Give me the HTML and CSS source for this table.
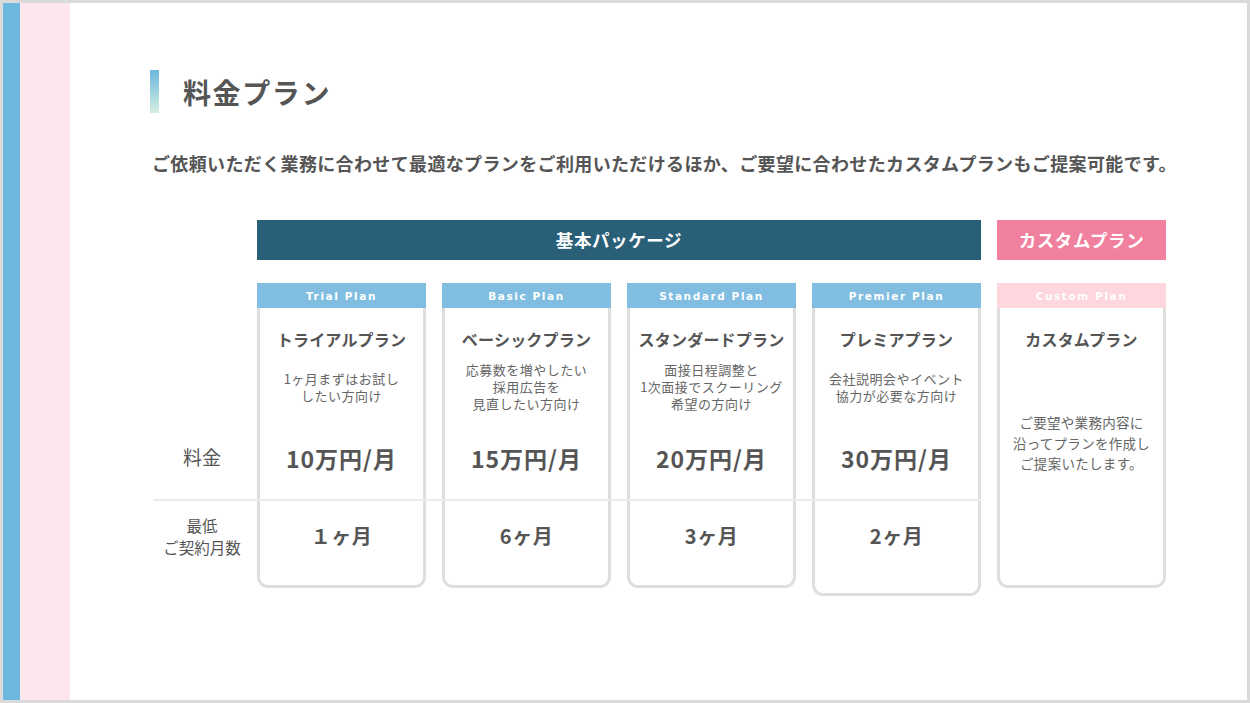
FILE: index.html
```html
<!DOCTYPE html>
<html lang="ja">
<head>
<meta charset="utf-8">
<title>料金プラン</title>
<link rel="stylesheet" href="styles.css">
</head>
<body>
<div class="frame">
  <div class="stripe-blue"></div>
  <div class="stripe-pink"></div>
  <main class="content">
    <h1 class="title"><span class="accent"></span><span>料金プラン</span></h1>
    <p class="lead">ご依頼いただく業務に合わせて最適なプランをご利用いただけるほか、ご要望に合わせたカスタムプランもご提案可能です。</p>

    <div class="heads">
      <div class="head-spacer"></div>
      <div class="head head-pkg">基本パッケージ</div>
      <div class="head head-custom">カスタムプラン</div>
    </div>

    <div class="plans">
      <div class="labels">
        <div class="label-spacer"></div>
        <div class="label label-price">料金</div>
        <div class="label label-months">最低<br>ご契約月数</div>
      </div>
      <div class="cards">
        <div class="card">
          <div class="band">Trial Plan</div>
          <div class="body">
            <div class="name">トライアルプラン</div>
            <div class="desc">1ヶ月まずはお試し<br>したい方向け</div>
            <div class="price">10万円/月</div>
            <div class="months">１ヶ月</div>
          </div>
        </div>
        <div class="card">
          <div class="band">Basic Plan</div>
          <div class="body">
            <div class="name">ベーシックプラン</div>
            <div class="desc">応募数を増やしたい<br>採用広告を<br>見直したい方向け</div>
            <div class="price">15万円/月</div>
            <div class="months">6ヶ月</div>
          </div>
        </div>
        <div class="card">
          <div class="band">Standard Plan</div>
          <div class="body">
            <div class="name">スタンダードプラン</div>
            <div class="desc">面接日程調整と<br>1次面接でスクーリング<br>希望の方向け</div>
            <div class="price">20万円/月</div>
            <div class="months">3ヶ月</div>
          </div>
        </div>
        <div class="card">
          <div class="band">Premier Plan</div>
          <div class="body body-tall">
            <div class="name">プレミアプラン</div>
            <div class="desc">会社説明会やイベント<br>協力が必要な方向け</div>
            <div class="price">30万円/月</div>
            <div class="months">2ヶ月</div>
          </div>
        </div>
        <div class="card card-custom">
          <div class="band band-custom">Custom Plan</div>
          <div class="body">
            <div class="name">カスタムプラン</div>
            <div class="custom-desc">ご要望や業務内容に<br>沿ってプランを作成し<br>ご提案いたします。</div>
          </div>
        </div>
      </div>
      <div class="divider"></div>
    </div>
  </main>
</div>
</body>
</html>
```

FILE: styles.css
```css
* { box-sizing: border-box; }

html, body {
  margin: 0;
  padding: 0;
  background: #ffffff;
}

body {
  font-family: "Noto Sans CJK JP", "Noto Sans", sans-serif;
  color: #555555;
}

.frame {
  width: 1250px;
  height: 703px;
  border: 3px solid #dadada;
  display: flex;
  background: #ffffff;
  overflow: hidden;
}

.stripe-blue {
  width: 17px;
  flex: none;
  background: #6cb8de;
}

.stripe-pink {
  width: 50px;
  flex: none;
  background: #fde6ec;
}

.content {
  flex: 1;
  padding: 67px 0 0 80px;
}

.title {
  margin: 0;
  height: 43px;
  display: flex;
  align-items: center;
  gap: 24px;
  font-size: 28px;
  font-weight: 700;
  letter-spacing: 1.6px;
  color: #555555;
}

.accent {
  width: 9px;
  height: 43px;
  background: linear-gradient(to bottom, #6cb8de, #d4eee1);
}

.lead {
  margin: 37px 0 0 0;
  padding-left: 2px;
  font-size: 18px;
  line-height: 27px;
  font-weight: 700;
  letter-spacing: 0.36px;
  white-space: nowrap;
  color: #555555;
}

.heads {
  margin-top: 43px;
  display: flex;
  gap: 16px;
}

.head-spacer {
  width: 91px;
  flex: none;
}

.head {
  height: 40px;
  display: flex;
  align-items: center;
  justify-content: center;
  padding-bottom: 2px;
  color: #ffffff;
  font-size: 17.5px;
  font-weight: 700;
  letter-spacing: 0.6px;
}

.head-pkg {
  width: 724px;
  background: #2a5f78;
}

.head-custom {
  width: 169px;
  background: #f0809e;
}

.plans {
  position: relative;
  margin-top: 23px;
  display: flex;
}

.labels {
  width: 107px;
  flex: none;
  display: flex;
  flex-direction: column;
  padding-right: 3px;
}

.label-spacer {
  height: 139px;
}

.label {
  display: flex;
  align-items: center;
  justify-content: center;
  text-align: center;
  color: #555555;
}

.label-price {
  height: 79px;
  padding-bottom: 10px;
  font-size: 19px;
}

.label-months {
  height: 72px;
  font-size: 15.5px;
  line-height: 22.5px;
  padding-bottom: 2px;
}

.cards {
  display: flex;
  gap: 16px;
  align-items: flex-start;
}

.card {
  width: 169px;
  display: flex;
  flex-direction: column;
}

.band {
  height: 25px;
  background: #80bde0;
  color: #ffffff;
  font-family: "DejaVu Sans", "Noto Sans", sans-serif;
  font-size: 10.5px;
  font-weight: 700;
  letter-spacing: 1.6px;
  display: flex;
  align-items: center;
  justify-content: center;
}

.band-custom {
  background: #fdd6de;
  color: #ffffff;
}

.body {
  height: 280px;
  border: 3px solid #dedede;
  border-top: none;
  border-radius: 0 0 11px 11px;
  display: flex;
  flex-direction: column;
  align-items: center;
  padding-top: 19px;
}

.body-tall {
  height: 288px;
}

.name {
  height: 24px;
  line-height: 24px;
  font-size: 16px;
  font-weight: 700;
  letter-spacing: 0.2px;
  color: #555555;
  white-space: nowrap;
}

.desc {
  height: 71px;
  display: flex;
  align-items: center;
  justify-content: center;
  text-align: center;
  font-size: 13px;
  line-height: 17px;
  letter-spacing: 0.5px;
  color: #666666;
  white-space: nowrap;
}

.price {
  height: 79px;
  display: flex;
  align-items: center;
  justify-content: center;
  padding-bottom: 8px;
  font-size: 23px;
  font-weight: 700;
  letter-spacing: 1px;
  color: #555555;
  white-space: nowrap;
}

.months {
  height: 72px;
  display: flex;
  align-items: center;
  justify-content: center;
  padding-bottom: 4px;
  font-size: 20px;
  font-weight: 700;
  letter-spacing: 0.5px;
  color: #555555;
  white-space: nowrap;
}

.custom-desc {
  margin-top: 61px;
  text-align: center;
  font-size: 13.5px;
  line-height: 20.5px;
  letter-spacing: 0.3px;
  color: #666666;
  white-space: nowrap;
}

.divider {
  position: absolute;
  left: 3px;
  top: 216px;
  width: 828px;
  height: 2px;
  background: #ececec;
}
```
